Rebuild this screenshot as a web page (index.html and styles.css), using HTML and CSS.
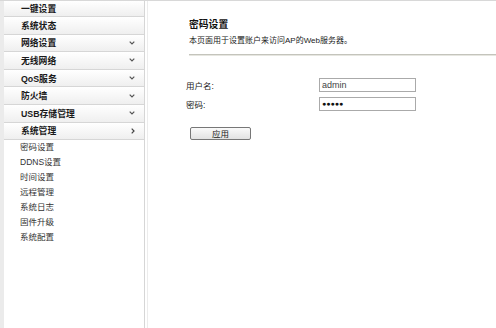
FILE: index.html
```html
<!DOCTYPE html>
<html lang="zh-CN">
<head>
<meta charset="utf-8">
<link rel="stylesheet" href="styles.css">
</head>
<body>
<div class="page">
  <div class="edge"></div>
  <nav class="sidebar">
    <div class="item first"><span>一键设置</span></div>
    <div class="item"><span>系统状态</span></div>
    <div class="item"><span>网络设置</span><svg class="chev" width="6" height="4" viewBox="0 0 6 4"><polyline points="0.7,0.7 3,3 5.3,0.7" fill="none" stroke="#555" stroke-width="1.2"/></svg></div>
    <div class="item"><span>无线网络</span><svg class="chev" width="6" height="4" viewBox="0 0 6 4"><polyline points="0.7,0.7 3,3 5.3,0.7" fill="none" stroke="#555" stroke-width="1.2"/></svg></div>
    <div class="item"><span>QoS服务</span><svg class="chev" width="6" height="4" viewBox="0 0 6 4"><polyline points="0.7,0.7 3,3 5.3,0.7" fill="none" stroke="#555" stroke-width="1.2"/></svg></div>
    <div class="item"><span>防火墙</span><svg class="chev" width="6" height="4" viewBox="0 0 6 4"><polyline points="0.7,0.7 3,3 5.3,0.7" fill="none" stroke="#555" stroke-width="1.2"/></svg></div>
    <div class="item"><span>USB存储管理</span><svg class="chev" width="6" height="4" viewBox="0 0 6 4"><polyline points="0.7,0.7 3,3 5.3,0.7" fill="none" stroke="#555" stroke-width="1.2"/></svg></div>
    <div class="item"><span>系统管理</span><svg class="chev" width="4" height="6" viewBox="0 0 4 6"><polyline points="0.7,0.7 3,3 0.7,5.3" fill="none" stroke="#444" stroke-width="1.2"/></svg></div>
    <ul class="sub">
      <li>密码设置</li>
      <li>DDNS设置</li>
      <li>时间设置</li>
      <li>远程管理</li>
      <li>系统日志</li>
      <li>固件升级</li>
      <li>系统配置</li>
    </ul>
  </nav>
  <div class="gap"></div>
  <main class="main">
    <h1 class="title">密码设置</h1>
    <p class="desc">本页面用于设置账户来访问AP的Web服务器。</p>
    <div class="rule"></div>
    <div class="form">
      <label class="lbl">用户名:</label>
      <div class="field">admin</div>
      <label class="lbl">密码:</label>
      <div class="field dots">&#9679;&#9679;&#9679;&#9679;&#9679;</div>
    </div>
    <button class="btn">应用</button>
  </main>
</div>
</body>
</html>
```
FILE: styles.css
```css
html, body {
  margin: 0;
  padding: 0;
  background: #fff;
}
body {
  font-family: "Liberation Sans", "Noto Sans CJK SC", sans-serif;
  color: #222;
  width: 496px;
  height: 328px;
  overflow: hidden;
}
.page {
  display: flex;
  height: 328px;
  border-top: 1px solid #d8d8d8;
  box-sizing: border-box;
}
.edge {
  width: 4px;
  background: #ebebeb;
}
.sidebar {
  width: 140px;
  border-right: 1px solid #d6d6d6;
  background: #fff;
}
.item {
  height: 17.6px;
  box-sizing: border-box;
  display: flex;
  align-items: center;
  justify-content: space-between;
  padding: 0 9px 0 17px;
  font-size: 8.8px;
  font-weight: bold;
  color: #1a1a1a;
  background: linear-gradient(#ffffff, #efefef);
  border-bottom: 1px solid #d6d6d6;
}
.item.first {
  height: 16px;
}
.chev {
  display: block;
  flex: none;
}
.sub {
  list-style: none;
  margin: 0;
  padding: 0 0 0 16px;
}
.sub li {
  height: 15px;
  line-height: 15px;
  font-size: 8.5px;
  color: #333;
}
.gap {
  width: 2px;
  border-right: 1px solid #ececec;
}
.main {
  flex: 1;
  padding: 17px 0 0 41px;
}
.title {
  margin: 0;
  font-size: 9.8px;
  font-weight: bold;
  line-height: 14px;
  color: #111;
}
.desc {
  margin: 3px 0 0;
  font-size: 8px;
  line-height: 12px;
  color: #222;
}
.rule {
  margin-top: 7px;
  height: 1px;
  background: #c4c4bc;
  border-bottom: 1px solid #e6e6e0;
}
.form {
  margin-top: 22px;
  margin-left: -3px;
  display: grid;
  grid-template-columns: 133px 97px;
  row-gap: 5px;
  align-items: center;
}
.lbl {
  font-size: 8.5px;
  color: #222;
}
.field {
  height: 14px;
  box-sizing: border-box;
  border: 1px solid #aaa;
  font-size: 9px;
  line-height: 12px;
  padding-left: 2px;
  color: #444;
}
.dots {
  font-size: 7px;
  color: #111;
}
.btn {
  display: block;
  margin-top: 16px;
  margin-left: 1px;
  width: 61px;
  height: 13px;
  padding: 0;
  font-family: "Noto Sans CJK SC", sans-serif;
  font-size: 8.5px;
  line-height: 11px;
  color: #222;
  border: 1px solid #777;
  border-radius: 2px;
  background: linear-gradient(#fafafa, #e2e2e2);
}
```
